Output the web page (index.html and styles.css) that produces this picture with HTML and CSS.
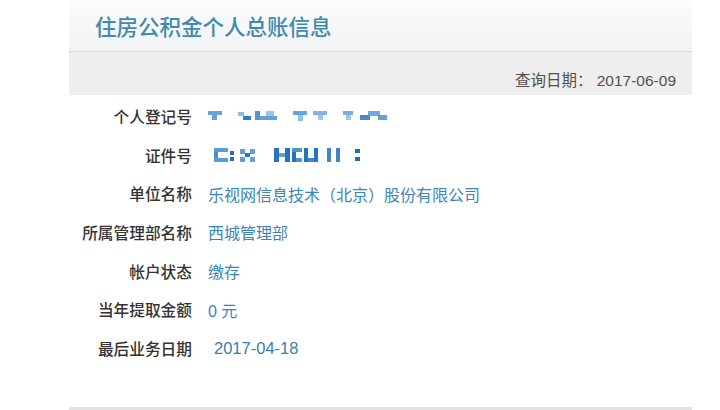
FILE: index.html
```html
<!DOCTYPE html>
<html lang="zh-CN">
<head>
<meta charset="utf-8">
<title>住房公积金个人总账信息</title>
<link rel="stylesheet" href="styles.css">
</head>
<body>
<div class="panel">
  <div class="header">住房公积金个人总账信息</div>
  <div class="subbar">查询日期：&nbsp;2017-06-09</div>
  <div class="rows">
    <div class="row">
      <span class="label">个人登记号</span>
      <span class="value">
        <svg class="mosaic" width="190" height="16" viewBox="0 0 190 16">
          <rect x="0" y="3" width="14" height="4" fill="#3f8fcf" opacity=".8"/>
          <rect x="4" y="7" width="5" height="5" fill="#2a78c0" opacity=".7"/>
          <rect x="30" y="4" width="6" height="4" fill="#5aa2d8" opacity=".7"/>
          <rect x="35" y="8" width="8" height="4" fill="#1f6fb8" opacity=".9"/>
          <rect x="47" y="3" width="5" height="9" fill="#2b7bc4" opacity=".8"/>
          <rect x="52" y="8" width="17" height="4" fill="#3b8bcf" opacity=".8"/>
          <rect x="58" y="3" width="8" height="5" fill="#6aaedf" opacity=".7"/>
          <rect x="85" y="3" width="14" height="4" fill="#3f8fcf" opacity=".8"/>
          <rect x="90" y="7" width="5" height="6" fill="#4b96d2" opacity=".6"/>
          <rect x="105" y="3" width="14" height="4" fill="#4a96d4" opacity=".7"/>
          <rect x="110" y="7" width="5" height="5" fill="#5aa2d8" opacity=".6"/>
          <rect x="135" y="3" width="10" height="4" fill="#3f8fcf" opacity=".7"/>
          <rect x="138" y="7" width="5" height="5" fill="#5aa2d8" opacity=".6"/>
          <rect x="152" y="7" width="10" height="5" fill="#2474bd" opacity=".85"/>
          <rect x="160" y="3" width="12" height="5" fill="#4a96d4" opacity=".8"/>
          <rect x="170" y="7" width="9" height="5" fill="#3b8bcf" opacity=".8"/>
        </svg>
      </span>
    </div>
    <div class="row">
      <span class="label">证件号</span>
      <span class="value">
        <svg class="mosaic" width="190" height="18" viewBox="0 0 190 18">
          <rect x="6" y="2" width="14" height="4" fill="#3a8ad0" opacity=".85"/>
          <rect x="6" y="6" width="4" height="6" fill="#2a78c0" opacity=".85"/>
          <rect x="6" y="12" width="14" height="4" fill="#3a8ad0" opacity=".85"/>
          <rect x="22" y="5" width="4" height="4" fill="#1f6fb8"/>
          <rect x="22" y="11" width="4" height="4" fill="#1f6fb8"/>
          <rect x="32" y="3" width="5" height="5" fill="#3b8bcf" opacity=".8"/>
          <rect x="42" y="3" width="5" height="5" fill="#3b8bcf" opacity=".8"/>
          <rect x="37" y="7" width="5" height="4" fill="#2a78c0"/>
          <rect x="32" y="11" width="5" height="5" fill="#3b8bcf" opacity=".8"/>
          <rect x="42" y="11" width="5" height="5" fill="#3b8bcf" opacity=".8"/>
          <rect x="66" y="2" width="5" height="14" fill="#2474bd"/>
          <rect x="71" y="7" width="6" height="4" fill="#3b8bcf" opacity=".8"/>
          <rect x="77" y="2" width="5" height="14" fill="#2474bd"/>
          <rect x="84" y="2" width="10" height="4" fill="#4b96d2"/>
          <rect x="84" y="6" width="4" height="10" fill="#2474bd"/>
          <rect x="88" y="12" width="6" height="4" fill="#4b96d2"/>
          <rect x="96" y="2" width="4" height="14" fill="#2474bd"/>
          <rect x="100" y="12" width="6" height="4" fill="#3b8bcf"/>
          <rect x="106" y="2" width="4" height="14" fill="#2474bd"/>
          <rect x="119" y="2" width="4" height="14" fill="#2a78c0" opacity=".9"/>
          <rect x="128" y="2" width="4" height="14" fill="#2a78c0" opacity=".9"/>
          <rect x="147" y="3" width="5" height="4" fill="#1f6fb8"/>
          <rect x="147" y="11" width="5" height="4" fill="#1f6fb8"/>
        </svg>
      </span>
    </div>
    <div class="row">
      <span class="label">单位名称</span>
      <span class="value">乐视网信息技术（北京）股份有限公司</span>
    </div>
    <div class="row">
      <span class="label">所属管理部名称</span>
      <span class="value">西城管理部</span>
    </div>
    <div class="row">
      <span class="label">帐户状态</span>
      <span class="value">缴存</span>
    </div>
    <div class="row">
      <span class="label">当年提取金额</span>
      <span class="value">0 元</span>
    </div>
    <div class="row">
      <span class="label">最后业务日期</span>
      <span class="value value-date">2017-04-18</span>
    </div>
  </div>
</div>
</body>
</html>
```

FILE: styles.css
```css
html, body {
  margin: 0;
  padding: 0;
  background: #ffffff;
}

body {
  width: 720px;
  height: 410px;
  overflow: hidden;
  font-family: "Liberation Sans", "Noto Sans CJK SC", sans-serif;
}

.panel {
  margin-left: 69px;
  width: 623px;
  height: 407px;
  display: flex;
  flex-direction: column;
  border-bottom: 3px solid #e3e3e3;
  box-sizing: content-box;
}

.header {
  height: 52px;
  flex: none;
  box-sizing: border-box;
  padding-left: 26px;
  display: flex;
  align-items: center;
  padding-bottom: 1px;
  font-size: 21.5px;
  font-weight: 500;
  color: #3f8aae;
  background: linear-gradient(#fafbfc, #f1f3f4);
  border-bottom: 1px solid #d6d8d9;
}

.subbar {
  height: 43px;
  flex: none;
  box-sizing: border-box;
  background: #eeeeee;
  display: flex;
  justify-content: flex-end;
  align-items: center;
  padding-top: 11px;
  padding-right: 16px;
  font-size: 15.5px;
  color: #505050;
}

.rows {
  flex: 1;
  padding-top: 2px;
}

.row {
  height: 38.7px;
  display: flex;
  align-items: center;
  gap: 16px;
}

.label {
  width: 123px;
  flex: none;
  text-align: right;
  font-size: 15.7px;
  font-weight: 500;
  color: #333333;
  white-space: nowrap;
}

.value {
  font-size: 16px;
  color: #3a86ba;
  display: flex;
  align-items: center;
}

.value-date {
  padding-left: 6px;
  font-size: 16.5px;
  color: #3a80aa;
}

.mosaic {
  display: block;
  filter: blur(0.6px);
}
```
